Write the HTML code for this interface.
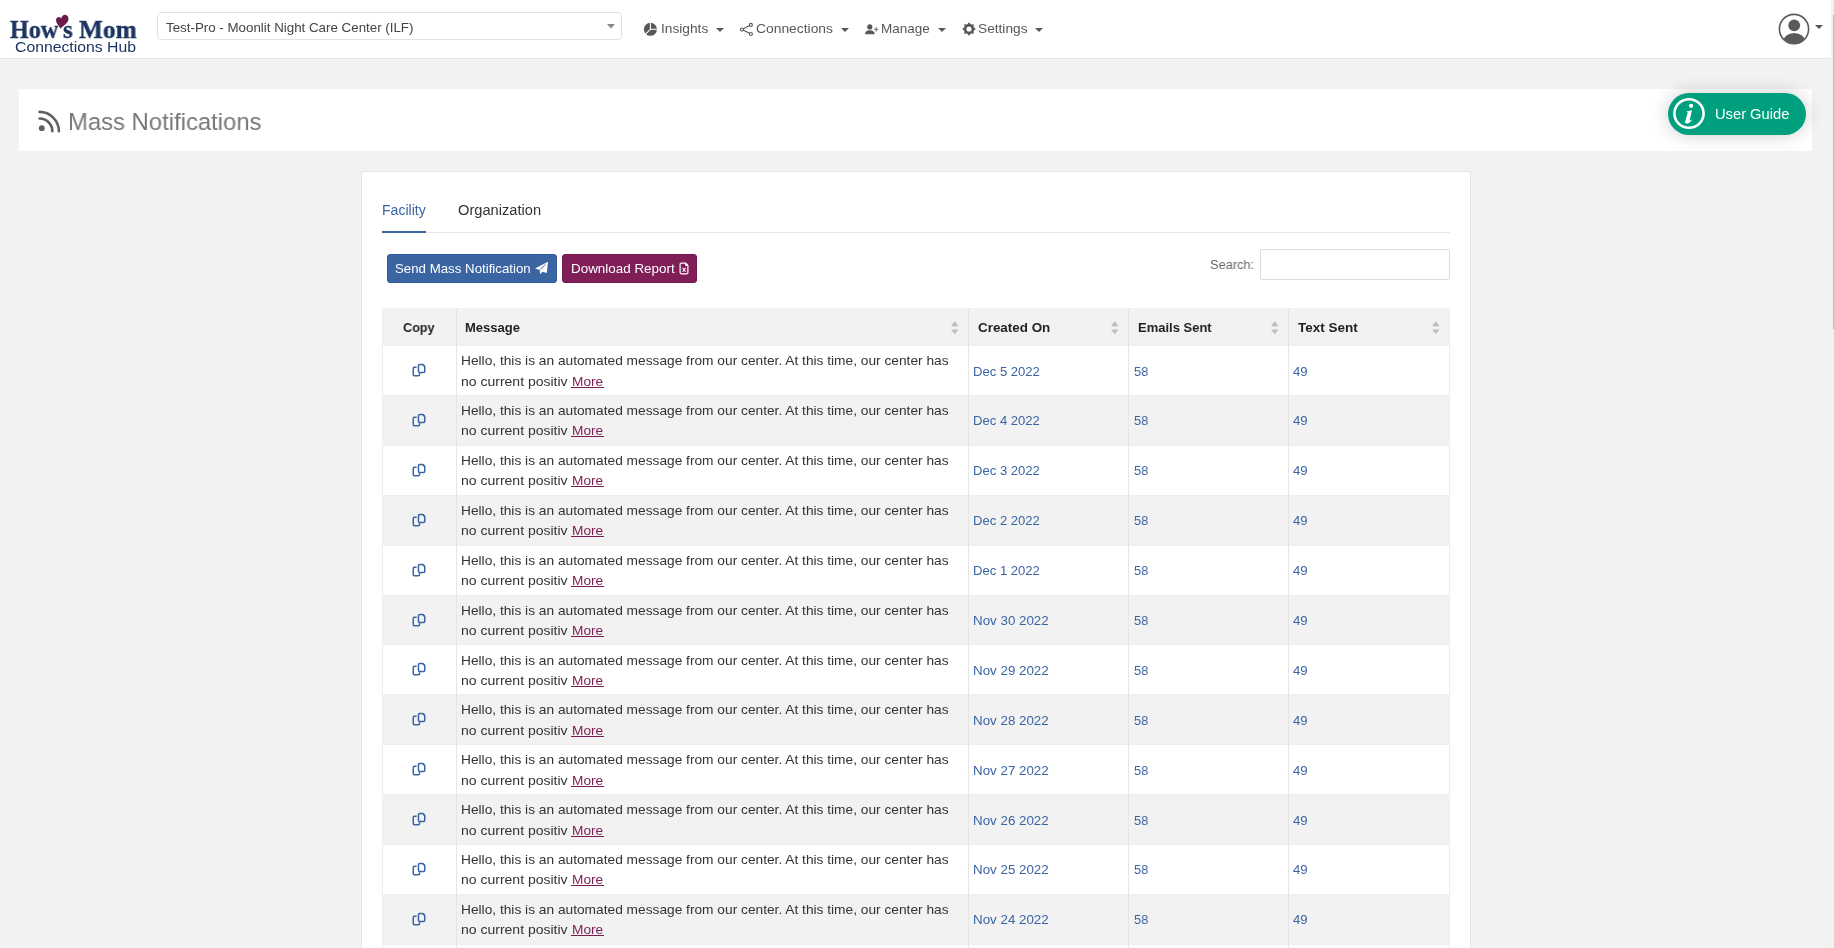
<!DOCTYPE html><html><head><meta charset="utf-8"><title>Mass Notifications</title><style>
*{box-sizing:border-box}
html,body{margin:0;padding:0}
body{width:1834px;height:948px;overflow:hidden;background:#f2f2f2;position:relative;font-family:'Liberation Sans',sans-serif}
.t{position:absolute;white-space:nowrap;will-change:transform}
.abs{position:absolute}
svg{position:absolute;overflow:visible}
</style></head><body><header>
<div class="abs" style="left:0;top:0;width:1831px;height:58px;background:#fff"></div>
<div class="abs" style="left:0;top:58px;width:1831px;height:1px;background:#e4e6e8"></div>
<div class="abs" style="left:1831px;top:0;width:3px;height:948px;background:#f1f1f1"></div>
<div class="abs" style="left:1833px;top:15px;width:1px;height:314px;background:#bdbdbd"></div>
<div class="t" style="left:9.80px;top:17.29px;font-size:26.0px;line-height:26.0px;font-family:'Liberation Serif', serif;color:#1c3461;font-weight:bold;transform:scaleX(0.9269);transform-origin:0 0;-webkit-text-stroke:0.35px #1c3461;">How</div>
<div class="t" style="left:62.80px;top:17.29px;font-size:26.0px;line-height:26.0px;font-family:'Liberation Serif', serif;color:#1c3461;font-weight:bold;transform:scaleX(0.9566);transform-origin:0 0;-webkit-text-stroke:0.35px #1c3461;">s</div>
<div class="t" style="left:79.00px;top:17.29px;font-size:26.0px;line-height:26.0px;font-family:'Liberation Serif', serif;color:#1c3461;font-weight:bold;transform:scaleX(0.9755);transform-origin:0 0;-webkit-text-stroke:0.35px #1c3461;">Mom</div>
<svg style="left:50px;top:10px" width="20" height="20" viewBox="0 0 20 20"><path d="M10.3 18.7 C9.5 16 6.6 14 6.1 11.2 C5.7 8.7 7 6.9 8.8 7 C10 7.1 10.8 7.8 11.2 8.6 C11.6 6 13.4 4.6 15.2 4.7 C17.4 4.9 18.8 7 18.5 9.6 C18.1 12.5 14.8 15.2 10.3 18.7 Z" fill="#6b1b47"/></svg>
<div class="t" style="left:14.80px;top:39.70px;font-size:14.3px;line-height:14.3px;font-family:'Liberation Sans', sans-serif;color:#1c3461;font-weight:normal;transform:scaleX(1.1032);transform-origin:0 0;">Connections Hub</div>
<div class="abs" style="left:157px;top:12px;width:465px;height:28px;border:1px solid #dfe2e5;border-radius:4px;background:#fff"></div>
<div class="t" style="left:165.80px;top:20.74px;font-size:13.3px;line-height:13.3px;font-family:'Liberation Sans', sans-serif;color:#444;font-weight:normal;transform:scaleX(1.0026);transform-origin:0 0;">Test-Pro - Moonlit Night Care Center (ILF)</div>
<svg style="left:607px;top:24px" width="8" height="5" viewBox="0 0 8 5"><path d="M0 0H8L4 4.5Z" fill="#888"/></svg>
<nav>
<svg style="left:643px;top:22px" width="15" height="15" viewBox="0 0 15 15"><circle cx="7.4" cy="7.3" r="6.5" fill="#585858"/><path d="M7.4 7.3 V0 M7.4 7.3 H14.5 M7.4 7.3 L2 12.7" stroke="#fff" stroke-width="1.1"/></svg>
<div class="t" style="left:660.95px;top:21.80px;font-size:13.0px;line-height:13.0px;font-family:'Liberation Sans', sans-serif;color:#585858;font-weight:normal;transform:scaleX(1.0550);transform-origin:0 0;">Insights</div>
<svg style="left:716px;top:28px" width="8" height="4" viewBox="0 0 8 4"><path d="M0 0H8L4 4Z" fill="#585858"/></svg>
<svg style="left:739px;top:21px" width="15" height="16" viewBox="0 0 15 16"><g fill="none" stroke="#585858" stroke-width="1.15"><circle cx="11.9" cy="3.9" r="1.5"/><circle cx="3" cy="8.45" r="1.5"/><circle cx="11.9" cy="13" r="1.5"/><path d="M4.4 7.7 L10.5 4.6 M4.4 9.2 L10.5 12.3"/></g></svg>
<div class="t" style="left:756.20px;top:21.80px;font-size:13.0px;line-height:13.0px;font-family:'Liberation Sans', sans-serif;color:#585858;font-weight:normal;transform:scaleX(1.0653);transform-origin:0 0;">Connections</div>
<svg style="left:841px;top:28px" width="8" height="4" viewBox="0 0 8 4"><path d="M0 0H8L4 4Z" fill="#585858"/></svg>
<svg style="left:864px;top:23px" width="16" height="13" viewBox="0 0 16 13"><circle cx="5.8" cy="3.9" r="2.6" fill="#585858"/><path d="M1 11.2 C1 8.6 3 7.2 5.8 7.2 C8.6 7.2 10.7 8.6 10.7 11.2Z" fill="#585858"/><path d="M12.2 4.3 V8.5 M10.1 6.4 H14.3" stroke="#585858" stroke-width="1.3" opacity="0.75"/></svg>
<div class="t" style="left:881.40px;top:21.80px;font-size:13.0px;line-height:13.0px;font-family:'Liberation Sans', sans-serif;color:#585858;font-weight:normal;transform:scaleX(1.0384);transform-origin:0 0;">Manage</div>
<svg style="left:938px;top:28px" width="8" height="4" viewBox="0 0 8 4"><path d="M0 0H8L4 4Z" fill="#585858"/></svg>
<svg style="left:961.5px;top:22.4px" width="14" height="14" viewBox="0 0 14 14"><path fill-rule="evenodd" d="M7.00,0.30 L8.88,2.47 L11.74,2.26 L11.53,5.12 L13.70,7.00 L11.53,8.88 L11.74,11.74 L8.88,11.53 L7.00,13.70 L5.12,11.53 L2.26,11.74 L2.47,8.88 L0.30,7.00 L2.47,5.12 L2.26,2.26 L5.12,2.47Z M9.6 7 A2.6 2.6 0 1 0 4.4 7 A2.6 2.6 0 1 0 9.6 7Z" fill="#585858"/></svg>
<div class="t" style="left:977.70px;top:21.80px;font-size:13.0px;line-height:13.0px;font-family:'Liberation Sans', sans-serif;color:#585858;font-weight:normal;transform:scaleX(1.0533);transform-origin:0 0;">Settings</div>
<svg style="left:1035px;top:28px" width="8" height="4" viewBox="0 0 8 4"><path d="M0 0H8L4 4Z" fill="#585858"/></svg>
</nav>
<svg style="left:1778px;top:13px" width="32" height="32" viewBox="0 0 32 32"><defs><clipPath id="cc"><circle cx="16" cy="16" r="14.2"/></clipPath></defs><circle cx="16" cy="16" r="14.6" fill="none" stroke="#5a5a5a" stroke-width="1.6"/><g clip-path="url(#cc)" fill="#5a5a5a"><circle cx="16.2" cy="12.3" r="5.9"/><ellipse cx="16.2" cy="28.6" rx="11" ry="8.6"/></g></svg>
<svg style="left:1815px;top:24.5px" width="8" height="4" viewBox="0 0 8 4"><path d="M0 0H8L4 4Z" fill="#555"/></svg>
</header>
<main>
<div class="abs" style="left:19px;top:89px;width:1793px;height:62px;background:#fff"></div>
<svg style="left:38px;top:110px" width="23" height="22" viewBox="0 0 23 22"><g fill="none" stroke="#5d6165" stroke-width="2.6" stroke-linecap="round"><path d="M1.6 1.9 A19.3 19.3 0 0 1 20.9 21.2"/><path d="M1.6 8.5 A12.9 12.9 0 0 1 14.4 21.2"/></g><circle cx="3.8" cy="18.2" r="2.9" fill="#5d6165"/></svg>
<div class="t" style="left:68.10px;top:110.26px;font-size:24.5px;line-height:24.5px;font-family:'Liberation Sans', sans-serif;color:#777;font-weight:normal;transform:scaleX(0.9733);transform-origin:0 0;">Mass Notifications</div>
<div class="abs" style="left:1668px;top:93px;width:138px;height:42px;border-radius:21px;background:#00a07f;box-shadow:0 0 18px rgba(0,0,0,0.2)"></div>
<svg style="left:1672px;top:97px" width="34" height="34" viewBox="0 0 34 34"><ellipse cx="17" cy="16.5" rx="14.6" ry="14.3" fill="none" stroke="#fff" stroke-width="2.6"/><circle cx="19.1" cy="8.8" r="2.15" fill="#fff"/><path d="M14.4 14.4 L20 13.2 L17.5 23.7 C18.2 23.6 19 23.2 19.8 22.6 L19.9 23 C18.6 25.2 16.8 26.6 14.9 26.6 C13.4 26.4 12.8 25.8 13.0 24.9 L15.8 15.4 L14.6 14.8 Z" fill="#fff"/></svg>
<div class="t" style="left:1714.60px;top:106.80px;font-size:14.3px;line-height:14.3px;font-family:'Liberation Sans', sans-serif;color:#fff;font-weight:normal;transform:scaleX(1.0282);transform-origin:0 0;">User Guide</div>
<div class="abs" style="left:361px;top:171px;width:1110px;height:800px;background:#fff;border:1px solid #e3e6ea"></div>
<div class="t" style="left:382.10px;top:202.85px;font-size:14.0px;line-height:14.0px;font-family:'Liberation Sans', sans-serif;color:#3b64a2;font-weight:normal;transform:scaleX(1.0037);transform-origin:0 0;">Facility</div>
<div class="abs" style="left:382px;top:232px;width:1068px;height:1px;background:#e6e8ea"></div>
<div class="abs" style="left:382px;top:230.8px;width:44px;height:2px;background:#3b64a2"></div>
<div class="t" style="left:458.20px;top:202.85px;font-size:14.0px;line-height:14.0px;font-family:'Liberation Sans', sans-serif;color:#333;font-weight:normal;transform:scaleX(1.0469);transform-origin:0 0;">Organization</div>
<div class="abs" style="left:387px;top:254px;width:170px;height:29px;border-radius:3px;background:#3b64a2;border:1px solid #2f5a9c"></div>
<div class="t" style="left:394.90px;top:262.40px;font-size:13.0px;line-height:13.0px;font-family:'Liberation Sans', sans-serif;color:#fff;font-weight:normal;transform:scaleX(1.0209);transform-origin:0 0;">Send Mass Notification</div>
<svg style="left:534px;top:261px" width="15" height="14" viewBox="0 0 15 14"><path d="M14 0.8 L1 7.6 L5.6 9 L6.2 13 L8.6 10.8 L12.8 12 Z" fill="#fff"/><path d="M5.6 9 L11.6 3.4" stroke="#3b64a2" stroke-width="0.9"/></svg>
<div class="abs" style="left:562px;top:254px;width:135px;height:29px;border-radius:3px;background:#7f1e57;border:1px solid #761650"></div>
<div class="t" style="left:571.20px;top:262.40px;font-size:13.0px;line-height:13.0px;font-family:'Liberation Sans', sans-serif;color:#fff;font-weight:normal;transform:scaleX(1.0326);transform-origin:0 0;">Download Report</div>
<svg style="left:678.5px;top:261.5px" width="10" height="13" viewBox="0 0 10 13"><path d="M2.4 1.1 H6.6 L8.9 3.4 V10.4 C8.9 11.3 8.3 11.9 7.4 11.9 H2.6 C1.7 11.9 1.1 11.3 1.1 10.4 V2.4 C1.1 1.6 1.6 1.1 2.4 1.1Z" fill="none" stroke="#fff" stroke-width="1.2"/><circle cx="7.3" cy="2.7" r="1.3" fill="#fff"/><path d="M3.6 5.9 L6.6 9.8 M6.6 5.9 L3.6 9.8" stroke="#fff" stroke-width="1.05"/></svg>
<div class="t" style="left:1209.80px;top:257.70px;font-size:13.0px;line-height:13.0px;font-family:'Liberation Sans', sans-serif;color:#666;font-weight:normal;transform:scaleX(0.9825);transform-origin:0 0;">Search:</div>
<div class="abs" style="left:1260px;top:249px;width:190px;height:31px;border:1px solid #dcdcdc;border-radius:2px;background:#fff"></div>
<div class="abs" style="left:382px;top:308px;width:1068px;height:38px;background:#f2f2f2"></div>
<div class="t" style="left:403.20px;top:321.00px;font-size:13.0px;line-height:13.0px;font-family:'Liberation Sans', sans-serif;color:#222;font-weight:bold;transform:scaleX(0.9723);transform-origin:0 0;">Copy</div>
<div class="t" style="left:465.40px;top:321.00px;font-size:13.0px;line-height:13.0px;font-family:'Liberation Sans', sans-serif;color:#222;font-weight:bold;transform:scaleX(1.0014);transform-origin:0 0;">Message</div>
<svg style="left:950.7px;top:320.5px" width="8" height="14" viewBox="0 0 8 14"><path d="M0 5.2 L3.75 0.3 L7.5 5.2Z M0 8.4 L3.75 13.3 L7.5 8.4Z" fill="#bdbdbd"/></svg>
<div class="t" style="left:977.70px;top:321.00px;font-size:13.0px;line-height:13.0px;font-family:'Liberation Sans', sans-serif;color:#222;font-weight:bold;transform:scaleX(1.0318);transform-origin:0 0;">Created On</div>
<svg style="left:1110.7px;top:320.5px" width="8" height="14" viewBox="0 0 8 14"><path d="M0 5.2 L3.75 0.3 L7.5 5.2Z M0 8.4 L3.75 13.3 L7.5 8.4Z" fill="#bdbdbd"/></svg>
<div class="t" style="left:1138.00px;top:321.00px;font-size:13.0px;line-height:13.0px;font-family:'Liberation Sans', sans-serif;color:#222;font-weight:bold;transform:scaleX(0.9985);transform-origin:0 0;">Emails Sent</div>
<svg style="left:1270.7px;top:320.5px" width="8" height="14" viewBox="0 0 8 14"><path d="M0 5.2 L3.75 0.3 L7.5 5.2Z M0 8.4 L3.75 13.3 L7.5 8.4Z" fill="#bdbdbd"/></svg>
<div class="t" style="left:1297.80px;top:321.00px;font-size:13.0px;line-height:13.0px;font-family:'Liberation Sans', sans-serif;color:#222;font-weight:bold;transform:scaleX(1.0395);transform-origin:0 0;">Text Sent</div>
<svg style="left:1431.7px;top:320.5px" width="8" height="14" viewBox="0 0 8 14"><path d="M0 5.2 L3.75 0.3 L7.5 5.2Z M0 8.4 L3.75 13.3 L7.5 8.4Z" fill="#bdbdbd"/></svg>
<div class="abs" style="left:382px;top:345.70px;width:1068px;height:50.00px;background:#fff"></div>
<div class="abs" style="left:382px;top:345.20px;width:1068px;height:1px;background:#eeeeee"></div>
<svg style="left:412.0px;top:363.10px" width="15" height="15" viewBox="0 0 15 15"><g fill="none" stroke="#3b64a2" stroke-width="1.5"><path d="M4.6 4.25 H2.45 Q1.25 4.25 1.25 5.45 V11.55 Q1.25 12.75 2.45 12.75 H6.35 Q7.55 12.75 7.55 11.55 V10.3"/><path d="M7.65 1.45 H10.6 L12.75 3.6 V8.35 Q12.75 9.55 11.55 9.55 H7.65 Q6.45 9.55 6.45 8.35 V2.65 Q6.45 1.45 7.65 1.45 Z"/></g><path d="M10.2 1.2 L13 4 V2.4 L11.8 1.2Z" fill="#3b64a2"/></svg>
<div class="t" style="left:461.30px;top:354.00px;font-size:13.0px;line-height:13.0px;font-family:'Liberation Sans', sans-serif;color:#333;font-weight:normal;transform:scaleX(1.0560);transform-origin:0 0;">Hello, this is an automated message from our center. At this time, our center has</div>
<div class="t" style="left:461.30px;top:375.00px;font-size:13.0px;line-height:13.0px;font-family:'Liberation Sans', sans-serif;color:#333;font-weight:normal;transform:scaleX(1.0768);transform-origin:0 0;">no current positiv</div>
<div class="t" style="left:571.70px;top:375.00px;font-size:13.0px;line-height:13.0px;font-family:'Liberation Sans', sans-serif;color:#7b1c50;font-weight:normal;transform:scaleX(1.0526);transform-origin:0 0;">More</div>
<div class="abs" style="left:571.1px;top:387.00px;width:32.8px;height:1px;background:#7b1c50"></div>
<div class="t" style="left:973.30px;top:365.00px;font-size:13.0px;line-height:13.0px;font-family:'Liberation Sans', sans-serif;color:#3b64a2;font-weight:normal;transform:scaleX(1.0061);transform-origin:0 0;">Dec 5 2022</div>
<div class="t" style="left:1133.50px;top:365.00px;font-size:13.0px;line-height:13.0px;font-family:'Liberation Sans', sans-serif;color:#3b64a2;font-weight:normal;transform:scaleX(0.9841);transform-origin:0 0;">58</div>
<div class="t" style="left:1293.20px;top:365.00px;font-size:13.0px;line-height:13.0px;font-family:'Liberation Sans', sans-serif;color:#3b64a2;font-weight:normal;transform:scaleX(1.0118);transform-origin:0 0;">49</div>
<div class="abs" style="left:382px;top:395.58px;width:1068px;height:50.00px;background:#f2f2f2"></div>
<div class="abs" style="left:382px;top:395.08px;width:1068px;height:1px;background:#eeeeee"></div>
<svg style="left:412.0px;top:412.98px" width="15" height="15" viewBox="0 0 15 15"><g fill="none" stroke="#3b64a2" stroke-width="1.5"><path d="M4.6 4.25 H2.45 Q1.25 4.25 1.25 5.45 V11.55 Q1.25 12.75 2.45 12.75 H6.35 Q7.55 12.75 7.55 11.55 V10.3"/><path d="M7.65 1.45 H10.6 L12.75 3.6 V8.35 Q12.75 9.55 11.55 9.55 H7.65 Q6.45 9.55 6.45 8.35 V2.65 Q6.45 1.45 7.65 1.45 Z"/></g><path d="M10.2 1.2 L13 4 V2.4 L11.8 1.2Z" fill="#3b64a2"/></svg>
<div class="t" style="left:461.30px;top:404.00px;font-size:13.0px;line-height:13.0px;font-family:'Liberation Sans', sans-serif;color:#333;font-weight:normal;transform:scaleX(1.0560);transform-origin:0 0;">Hello, this is an automated message from our center. At this time, our center has</div>
<div class="t" style="left:461.30px;top:424.00px;font-size:13.0px;line-height:13.0px;font-family:'Liberation Sans', sans-serif;color:#333;font-weight:normal;transform:scaleX(1.0768);transform-origin:0 0;">no current positiv</div>
<div class="t" style="left:571.70px;top:424.00px;font-size:13.0px;line-height:13.0px;font-family:'Liberation Sans', sans-serif;color:#7b1c50;font-weight:normal;transform:scaleX(1.0526);transform-origin:0 0;">More</div>
<div class="abs" style="left:571.1px;top:436.00px;width:32.8px;height:1px;background:#7b1c50"></div>
<div class="t" style="left:973.30px;top:414.00px;font-size:13.0px;line-height:13.0px;font-family:'Liberation Sans', sans-serif;color:#3b64a2;font-weight:normal;transform:scaleX(1.0061);transform-origin:0 0;">Dec 4 2022</div>
<div class="t" style="left:1133.50px;top:414.00px;font-size:13.0px;line-height:13.0px;font-family:'Liberation Sans', sans-serif;color:#3b64a2;font-weight:normal;transform:scaleX(0.9841);transform-origin:0 0;">58</div>
<div class="t" style="left:1293.20px;top:414.00px;font-size:13.0px;line-height:13.0px;font-family:'Liberation Sans', sans-serif;color:#3b64a2;font-weight:normal;transform:scaleX(1.0118);transform-origin:0 0;">49</div>
<div class="abs" style="left:382px;top:445.46px;width:1068px;height:50.00px;background:#fff"></div>
<div class="abs" style="left:382px;top:444.96px;width:1068px;height:1px;background:#eeeeee"></div>
<svg style="left:412.0px;top:462.86px" width="15" height="15" viewBox="0 0 15 15"><g fill="none" stroke="#3b64a2" stroke-width="1.5"><path d="M4.6 4.25 H2.45 Q1.25 4.25 1.25 5.45 V11.55 Q1.25 12.75 2.45 12.75 H6.35 Q7.55 12.75 7.55 11.55 V10.3"/><path d="M7.65 1.45 H10.6 L12.75 3.6 V8.35 Q12.75 9.55 11.55 9.55 H7.65 Q6.45 9.55 6.45 8.35 V2.65 Q6.45 1.45 7.65 1.45 Z"/></g><path d="M10.2 1.2 L13 4 V2.4 L11.8 1.2Z" fill="#3b64a2"/></svg>
<div class="t" style="left:461.30px;top:454.00px;font-size:13.0px;line-height:13.0px;font-family:'Liberation Sans', sans-serif;color:#333;font-weight:normal;transform:scaleX(1.0560);transform-origin:0 0;">Hello, this is an automated message from our center. At this time, our center has</div>
<div class="t" style="left:461.30px;top:474.00px;font-size:13.0px;line-height:13.0px;font-family:'Liberation Sans', sans-serif;color:#333;font-weight:normal;transform:scaleX(1.0768);transform-origin:0 0;">no current positiv</div>
<div class="t" style="left:571.70px;top:474.00px;font-size:13.0px;line-height:13.0px;font-family:'Liberation Sans', sans-serif;color:#7b1c50;font-weight:normal;transform:scaleX(1.0526);transform-origin:0 0;">More</div>
<div class="abs" style="left:571.1px;top:486.00px;width:32.8px;height:1px;background:#7b1c50"></div>
<div class="t" style="left:973.30px;top:464.00px;font-size:13.0px;line-height:13.0px;font-family:'Liberation Sans', sans-serif;color:#3b64a2;font-weight:normal;transform:scaleX(1.0061);transform-origin:0 0;">Dec 3 2022</div>
<div class="t" style="left:1133.50px;top:464.00px;font-size:13.0px;line-height:13.0px;font-family:'Liberation Sans', sans-serif;color:#3b64a2;font-weight:normal;transform:scaleX(0.9841);transform-origin:0 0;">58</div>
<div class="t" style="left:1293.20px;top:464.00px;font-size:13.0px;line-height:13.0px;font-family:'Liberation Sans', sans-serif;color:#3b64a2;font-weight:normal;transform:scaleX(1.0118);transform-origin:0 0;">49</div>
<div class="abs" style="left:382px;top:495.34px;width:1068px;height:50.00px;background:#f2f2f2"></div>
<div class="abs" style="left:382px;top:494.84px;width:1068px;height:1px;background:#eeeeee"></div>
<svg style="left:412.0px;top:512.74px" width="15" height="15" viewBox="0 0 15 15"><g fill="none" stroke="#3b64a2" stroke-width="1.5"><path d="M4.6 4.25 H2.45 Q1.25 4.25 1.25 5.45 V11.55 Q1.25 12.75 2.45 12.75 H6.35 Q7.55 12.75 7.55 11.55 V10.3"/><path d="M7.65 1.45 H10.6 L12.75 3.6 V8.35 Q12.75 9.55 11.55 9.55 H7.65 Q6.45 9.55 6.45 8.35 V2.65 Q6.45 1.45 7.65 1.45 Z"/></g><path d="M10.2 1.2 L13 4 V2.4 L11.8 1.2Z" fill="#3b64a2"/></svg>
<div class="t" style="left:461.30px;top:504.00px;font-size:13.0px;line-height:13.0px;font-family:'Liberation Sans', sans-serif;color:#333;font-weight:normal;transform:scaleX(1.0560);transform-origin:0 0;">Hello, this is an automated message from our center. At this time, our center has</div>
<div class="t" style="left:461.30px;top:524.00px;font-size:13.0px;line-height:13.0px;font-family:'Liberation Sans', sans-serif;color:#333;font-weight:normal;transform:scaleX(1.0768);transform-origin:0 0;">no current positiv</div>
<div class="t" style="left:571.70px;top:524.00px;font-size:13.0px;line-height:13.0px;font-family:'Liberation Sans', sans-serif;color:#7b1c50;font-weight:normal;transform:scaleX(1.0526);transform-origin:0 0;">More</div>
<div class="abs" style="left:571.1px;top:536.00px;width:32.8px;height:1px;background:#7b1c50"></div>
<div class="t" style="left:973.30px;top:514.00px;font-size:13.0px;line-height:13.0px;font-family:'Liberation Sans', sans-serif;color:#3b64a2;font-weight:normal;transform:scaleX(1.0061);transform-origin:0 0;">Dec 2 2022</div>
<div class="t" style="left:1133.50px;top:514.00px;font-size:13.0px;line-height:13.0px;font-family:'Liberation Sans', sans-serif;color:#3b64a2;font-weight:normal;transform:scaleX(0.9841);transform-origin:0 0;">58</div>
<div class="t" style="left:1293.20px;top:514.00px;font-size:13.0px;line-height:13.0px;font-family:'Liberation Sans', sans-serif;color:#3b64a2;font-weight:normal;transform:scaleX(1.0118);transform-origin:0 0;">49</div>
<div class="abs" style="left:382px;top:545.22px;width:1068px;height:50.00px;background:#fff"></div>
<div class="abs" style="left:382px;top:544.72px;width:1068px;height:1px;background:#eeeeee"></div>
<svg style="left:412.0px;top:562.62px" width="15" height="15" viewBox="0 0 15 15"><g fill="none" stroke="#3b64a2" stroke-width="1.5"><path d="M4.6 4.25 H2.45 Q1.25 4.25 1.25 5.45 V11.55 Q1.25 12.75 2.45 12.75 H6.35 Q7.55 12.75 7.55 11.55 V10.3"/><path d="M7.65 1.45 H10.6 L12.75 3.6 V8.35 Q12.75 9.55 11.55 9.55 H7.65 Q6.45 9.55 6.45 8.35 V2.65 Q6.45 1.45 7.65 1.45 Z"/></g><path d="M10.2 1.2 L13 4 V2.4 L11.8 1.2Z" fill="#3b64a2"/></svg>
<div class="t" style="left:461.30px;top:554.00px;font-size:13.0px;line-height:13.0px;font-family:'Liberation Sans', sans-serif;color:#333;font-weight:normal;transform:scaleX(1.0560);transform-origin:0 0;">Hello, this is an automated message from our center. At this time, our center has</div>
<div class="t" style="left:461.30px;top:574.00px;font-size:13.0px;line-height:13.0px;font-family:'Liberation Sans', sans-serif;color:#333;font-weight:normal;transform:scaleX(1.0768);transform-origin:0 0;">no current positiv</div>
<div class="t" style="left:571.70px;top:574.00px;font-size:13.0px;line-height:13.0px;font-family:'Liberation Sans', sans-serif;color:#7b1c50;font-weight:normal;transform:scaleX(1.0526);transform-origin:0 0;">More</div>
<div class="abs" style="left:571.1px;top:586.00px;width:32.8px;height:1px;background:#7b1c50"></div>
<div class="t" style="left:973.30px;top:564.00px;font-size:13.0px;line-height:13.0px;font-family:'Liberation Sans', sans-serif;color:#3b64a2;font-weight:normal;transform:scaleX(1.0061);transform-origin:0 0;">Dec 1 2022</div>
<div class="t" style="left:1133.50px;top:564.00px;font-size:13.0px;line-height:13.0px;font-family:'Liberation Sans', sans-serif;color:#3b64a2;font-weight:normal;transform:scaleX(0.9841);transform-origin:0 0;">58</div>
<div class="t" style="left:1293.20px;top:564.00px;font-size:13.0px;line-height:13.0px;font-family:'Liberation Sans', sans-serif;color:#3b64a2;font-weight:normal;transform:scaleX(1.0118);transform-origin:0 0;">49</div>
<div class="abs" style="left:382px;top:595.10px;width:1068px;height:50.00px;background:#f2f2f2"></div>
<div class="abs" style="left:382px;top:594.60px;width:1068px;height:1px;background:#eeeeee"></div>
<svg style="left:412.0px;top:612.50px" width="15" height="15" viewBox="0 0 15 15"><g fill="none" stroke="#3b64a2" stroke-width="1.5"><path d="M4.6 4.25 H2.45 Q1.25 4.25 1.25 5.45 V11.55 Q1.25 12.75 2.45 12.75 H6.35 Q7.55 12.75 7.55 11.55 V10.3"/><path d="M7.65 1.45 H10.6 L12.75 3.6 V8.35 Q12.75 9.55 11.55 9.55 H7.65 Q6.45 9.55 6.45 8.35 V2.65 Q6.45 1.45 7.65 1.45 Z"/></g><path d="M10.2 1.2 L13 4 V2.4 L11.8 1.2Z" fill="#3b64a2"/></svg>
<div class="t" style="left:461.30px;top:604.00px;font-size:13.0px;line-height:13.0px;font-family:'Liberation Sans', sans-serif;color:#333;font-weight:normal;transform:scaleX(1.0560);transform-origin:0 0;">Hello, this is an automated message from our center. At this time, our center has</div>
<div class="t" style="left:461.30px;top:624.00px;font-size:13.0px;line-height:13.0px;font-family:'Liberation Sans', sans-serif;color:#333;font-weight:normal;transform:scaleX(1.0768);transform-origin:0 0;">no current positiv</div>
<div class="t" style="left:571.70px;top:624.00px;font-size:13.0px;line-height:13.0px;font-family:'Liberation Sans', sans-serif;color:#7b1c50;font-weight:normal;transform:scaleX(1.0526);transform-origin:0 0;">More</div>
<div class="abs" style="left:571.1px;top:636.00px;width:32.8px;height:1px;background:#7b1c50"></div>
<div class="t" style="left:973.10px;top:614.00px;font-size:13.0px;line-height:13.0px;font-family:'Liberation Sans', sans-serif;color:#3b64a2;font-weight:normal;transform:scaleX(1.0270);transform-origin:0 0;">Nov 30 2022</div>
<div class="t" style="left:1133.50px;top:614.00px;font-size:13.0px;line-height:13.0px;font-family:'Liberation Sans', sans-serif;color:#3b64a2;font-weight:normal;transform:scaleX(0.9841);transform-origin:0 0;">58</div>
<div class="t" style="left:1293.20px;top:614.00px;font-size:13.0px;line-height:13.0px;font-family:'Liberation Sans', sans-serif;color:#3b64a2;font-weight:normal;transform:scaleX(1.0118);transform-origin:0 0;">49</div>
<div class="abs" style="left:382px;top:644.98px;width:1068px;height:50.00px;background:#fff"></div>
<div class="abs" style="left:382px;top:644.48px;width:1068px;height:1px;background:#eeeeee"></div>
<svg style="left:412.0px;top:662.38px" width="15" height="15" viewBox="0 0 15 15"><g fill="none" stroke="#3b64a2" stroke-width="1.5"><path d="M4.6 4.25 H2.45 Q1.25 4.25 1.25 5.45 V11.55 Q1.25 12.75 2.45 12.75 H6.35 Q7.55 12.75 7.55 11.55 V10.3"/><path d="M7.65 1.45 H10.6 L12.75 3.6 V8.35 Q12.75 9.55 11.55 9.55 H7.65 Q6.45 9.55 6.45 8.35 V2.65 Q6.45 1.45 7.65 1.45 Z"/></g><path d="M10.2 1.2 L13 4 V2.4 L11.8 1.2Z" fill="#3b64a2"/></svg>
<div class="t" style="left:461.30px;top:654.00px;font-size:13.0px;line-height:13.0px;font-family:'Liberation Sans', sans-serif;color:#333;font-weight:normal;transform:scaleX(1.0560);transform-origin:0 0;">Hello, this is an automated message from our center. At this time, our center has</div>
<div class="t" style="left:461.30px;top:674.00px;font-size:13.0px;line-height:13.0px;font-family:'Liberation Sans', sans-serif;color:#333;font-weight:normal;transform:scaleX(1.0768);transform-origin:0 0;">no current positiv</div>
<div class="t" style="left:571.70px;top:674.00px;font-size:13.0px;line-height:13.0px;font-family:'Liberation Sans', sans-serif;color:#7b1c50;font-weight:normal;transform:scaleX(1.0526);transform-origin:0 0;">More</div>
<div class="abs" style="left:571.1px;top:686.00px;width:32.8px;height:1px;background:#7b1c50"></div>
<div class="t" style="left:973.10px;top:664.00px;font-size:13.0px;line-height:13.0px;font-family:'Liberation Sans', sans-serif;color:#3b64a2;font-weight:normal;transform:scaleX(1.0270);transform-origin:0 0;">Nov 29 2022</div>
<div class="t" style="left:1133.50px;top:664.00px;font-size:13.0px;line-height:13.0px;font-family:'Liberation Sans', sans-serif;color:#3b64a2;font-weight:normal;transform:scaleX(0.9841);transform-origin:0 0;">58</div>
<div class="t" style="left:1293.20px;top:664.00px;font-size:13.0px;line-height:13.0px;font-family:'Liberation Sans', sans-serif;color:#3b64a2;font-weight:normal;transform:scaleX(1.0118);transform-origin:0 0;">49</div>
<div class="abs" style="left:382px;top:694.86px;width:1068px;height:50.00px;background:#f2f2f2"></div>
<div class="abs" style="left:382px;top:694.36px;width:1068px;height:1px;background:#eeeeee"></div>
<svg style="left:412.0px;top:712.26px" width="15" height="15" viewBox="0 0 15 15"><g fill="none" stroke="#3b64a2" stroke-width="1.5"><path d="M4.6 4.25 H2.45 Q1.25 4.25 1.25 5.45 V11.55 Q1.25 12.75 2.45 12.75 H6.35 Q7.55 12.75 7.55 11.55 V10.3"/><path d="M7.65 1.45 H10.6 L12.75 3.6 V8.35 Q12.75 9.55 11.55 9.55 H7.65 Q6.45 9.55 6.45 8.35 V2.65 Q6.45 1.45 7.65 1.45 Z"/></g><path d="M10.2 1.2 L13 4 V2.4 L11.8 1.2Z" fill="#3b64a2"/></svg>
<div class="t" style="left:461.30px;top:703.00px;font-size:13.0px;line-height:13.0px;font-family:'Liberation Sans', sans-serif;color:#333;font-weight:normal;transform:scaleX(1.0560);transform-origin:0 0;">Hello, this is an automated message from our center. At this time, our center has</div>
<div class="t" style="left:461.30px;top:724.00px;font-size:13.0px;line-height:13.0px;font-family:'Liberation Sans', sans-serif;color:#333;font-weight:normal;transform:scaleX(1.0768);transform-origin:0 0;">no current positiv</div>
<div class="t" style="left:571.70px;top:724.00px;font-size:13.0px;line-height:13.0px;font-family:'Liberation Sans', sans-serif;color:#7b1c50;font-weight:normal;transform:scaleX(1.0526);transform-origin:0 0;">More</div>
<div class="abs" style="left:571.1px;top:736.00px;width:32.8px;height:1px;background:#7b1c50"></div>
<div class="t" style="left:973.10px;top:714.00px;font-size:13.0px;line-height:13.0px;font-family:'Liberation Sans', sans-serif;color:#3b64a2;font-weight:normal;transform:scaleX(1.0270);transform-origin:0 0;">Nov 28 2022</div>
<div class="t" style="left:1133.50px;top:714.00px;font-size:13.0px;line-height:13.0px;font-family:'Liberation Sans', sans-serif;color:#3b64a2;font-weight:normal;transform:scaleX(0.9841);transform-origin:0 0;">58</div>
<div class="t" style="left:1293.20px;top:714.00px;font-size:13.0px;line-height:13.0px;font-family:'Liberation Sans', sans-serif;color:#3b64a2;font-weight:normal;transform:scaleX(1.0118);transform-origin:0 0;">49</div>
<div class="abs" style="left:382px;top:744.74px;width:1068px;height:50.00px;background:#fff"></div>
<div class="abs" style="left:382px;top:744.24px;width:1068px;height:1px;background:#eeeeee"></div>
<svg style="left:412.0px;top:762.14px" width="15" height="15" viewBox="0 0 15 15"><g fill="none" stroke="#3b64a2" stroke-width="1.5"><path d="M4.6 4.25 H2.45 Q1.25 4.25 1.25 5.45 V11.55 Q1.25 12.75 2.45 12.75 H6.35 Q7.55 12.75 7.55 11.55 V10.3"/><path d="M7.65 1.45 H10.6 L12.75 3.6 V8.35 Q12.75 9.55 11.55 9.55 H7.65 Q6.45 9.55 6.45 8.35 V2.65 Q6.45 1.45 7.65 1.45 Z"/></g><path d="M10.2 1.2 L13 4 V2.4 L11.8 1.2Z" fill="#3b64a2"/></svg>
<div class="t" style="left:461.30px;top:753.00px;font-size:13.0px;line-height:13.0px;font-family:'Liberation Sans', sans-serif;color:#333;font-weight:normal;transform:scaleX(1.0560);transform-origin:0 0;">Hello, this is an automated message from our center. At this time, our center has</div>
<div class="t" style="left:461.30px;top:774.00px;font-size:13.0px;line-height:13.0px;font-family:'Liberation Sans', sans-serif;color:#333;font-weight:normal;transform:scaleX(1.0768);transform-origin:0 0;">no current positiv</div>
<div class="t" style="left:571.70px;top:774.00px;font-size:13.0px;line-height:13.0px;font-family:'Liberation Sans', sans-serif;color:#7b1c50;font-weight:normal;transform:scaleX(1.0526);transform-origin:0 0;">More</div>
<div class="abs" style="left:571.1px;top:786.00px;width:32.8px;height:1px;background:#7b1c50"></div>
<div class="t" style="left:973.10px;top:764.00px;font-size:13.0px;line-height:13.0px;font-family:'Liberation Sans', sans-serif;color:#3b64a2;font-weight:normal;transform:scaleX(1.0270);transform-origin:0 0;">Nov 27 2022</div>
<div class="t" style="left:1133.50px;top:764.00px;font-size:13.0px;line-height:13.0px;font-family:'Liberation Sans', sans-serif;color:#3b64a2;font-weight:normal;transform:scaleX(0.9841);transform-origin:0 0;">58</div>
<div class="t" style="left:1293.20px;top:764.00px;font-size:13.0px;line-height:13.0px;font-family:'Liberation Sans', sans-serif;color:#3b64a2;font-weight:normal;transform:scaleX(1.0118);transform-origin:0 0;">49</div>
<div class="abs" style="left:382px;top:794.62px;width:1068px;height:50.00px;background:#f2f2f2"></div>
<div class="abs" style="left:382px;top:794.12px;width:1068px;height:1px;background:#eeeeee"></div>
<svg style="left:412.0px;top:812.02px" width="15" height="15" viewBox="0 0 15 15"><g fill="none" stroke="#3b64a2" stroke-width="1.5"><path d="M4.6 4.25 H2.45 Q1.25 4.25 1.25 5.45 V11.55 Q1.25 12.75 2.45 12.75 H6.35 Q7.55 12.75 7.55 11.55 V10.3"/><path d="M7.65 1.45 H10.6 L12.75 3.6 V8.35 Q12.75 9.55 11.55 9.55 H7.65 Q6.45 9.55 6.45 8.35 V2.65 Q6.45 1.45 7.65 1.45 Z"/></g><path d="M10.2 1.2 L13 4 V2.4 L11.8 1.2Z" fill="#3b64a2"/></svg>
<div class="t" style="left:461.30px;top:803.00px;font-size:13.0px;line-height:13.0px;font-family:'Liberation Sans', sans-serif;color:#333;font-weight:normal;transform:scaleX(1.0560);transform-origin:0 0;">Hello, this is an automated message from our center. At this time, our center has</div>
<div class="t" style="left:461.30px;top:824.00px;font-size:13.0px;line-height:13.0px;font-family:'Liberation Sans', sans-serif;color:#333;font-weight:normal;transform:scaleX(1.0768);transform-origin:0 0;">no current positiv</div>
<div class="t" style="left:571.70px;top:824.00px;font-size:13.0px;line-height:13.0px;font-family:'Liberation Sans', sans-serif;color:#7b1c50;font-weight:normal;transform:scaleX(1.0526);transform-origin:0 0;">More</div>
<div class="abs" style="left:571.1px;top:836.00px;width:32.8px;height:1px;background:#7b1c50"></div>
<div class="t" style="left:973.10px;top:814.00px;font-size:13.0px;line-height:13.0px;font-family:'Liberation Sans', sans-serif;color:#3b64a2;font-weight:normal;transform:scaleX(1.0270);transform-origin:0 0;">Nov 26 2022</div>
<div class="t" style="left:1133.50px;top:814.00px;font-size:13.0px;line-height:13.0px;font-family:'Liberation Sans', sans-serif;color:#3b64a2;font-weight:normal;transform:scaleX(0.9841);transform-origin:0 0;">58</div>
<div class="t" style="left:1293.20px;top:814.00px;font-size:13.0px;line-height:13.0px;font-family:'Liberation Sans', sans-serif;color:#3b64a2;font-weight:normal;transform:scaleX(1.0118);transform-origin:0 0;">49</div>
<div class="abs" style="left:382px;top:844.50px;width:1068px;height:50.00px;background:#fff"></div>
<div class="abs" style="left:382px;top:844.00px;width:1068px;height:1px;background:#eeeeee"></div>
<svg style="left:412.0px;top:861.90px" width="15" height="15" viewBox="0 0 15 15"><g fill="none" stroke="#3b64a2" stroke-width="1.5"><path d="M4.6 4.25 H2.45 Q1.25 4.25 1.25 5.45 V11.55 Q1.25 12.75 2.45 12.75 H6.35 Q7.55 12.75 7.55 11.55 V10.3"/><path d="M7.65 1.45 H10.6 L12.75 3.6 V8.35 Q12.75 9.55 11.55 9.55 H7.65 Q6.45 9.55 6.45 8.35 V2.65 Q6.45 1.45 7.65 1.45 Z"/></g><path d="M10.2 1.2 L13 4 V2.4 L11.8 1.2Z" fill="#3b64a2"/></svg>
<div class="t" style="left:461.30px;top:853.00px;font-size:13.0px;line-height:13.0px;font-family:'Liberation Sans', sans-serif;color:#333;font-weight:normal;transform:scaleX(1.0560);transform-origin:0 0;">Hello, this is an automated message from our center. At this time, our center has</div>
<div class="t" style="left:461.30px;top:873.00px;font-size:13.0px;line-height:13.0px;font-family:'Liberation Sans', sans-serif;color:#333;font-weight:normal;transform:scaleX(1.0768);transform-origin:0 0;">no current positiv</div>
<div class="t" style="left:571.70px;top:873.00px;font-size:13.0px;line-height:13.0px;font-family:'Liberation Sans', sans-serif;color:#7b1c50;font-weight:normal;transform:scaleX(1.0526);transform-origin:0 0;">More</div>
<div class="abs" style="left:571.1px;top:885.00px;width:32.8px;height:1px;background:#7b1c50"></div>
<div class="t" style="left:973.10px;top:863.00px;font-size:13.0px;line-height:13.0px;font-family:'Liberation Sans', sans-serif;color:#3b64a2;font-weight:normal;transform:scaleX(1.0270);transform-origin:0 0;">Nov 25 2022</div>
<div class="t" style="left:1133.50px;top:863.00px;font-size:13.0px;line-height:13.0px;font-family:'Liberation Sans', sans-serif;color:#3b64a2;font-weight:normal;transform:scaleX(0.9841);transform-origin:0 0;">58</div>
<div class="t" style="left:1293.20px;top:863.00px;font-size:13.0px;line-height:13.0px;font-family:'Liberation Sans', sans-serif;color:#3b64a2;font-weight:normal;transform:scaleX(1.0118);transform-origin:0 0;">49</div>
<div class="abs" style="left:382px;top:894.38px;width:1068px;height:50.00px;background:#f2f2f2"></div>
<div class="abs" style="left:382px;top:893.88px;width:1068px;height:1px;background:#eeeeee"></div>
<svg style="left:412.0px;top:911.78px" width="15" height="15" viewBox="0 0 15 15"><g fill="none" stroke="#3b64a2" stroke-width="1.5"><path d="M4.6 4.25 H2.45 Q1.25 4.25 1.25 5.45 V11.55 Q1.25 12.75 2.45 12.75 H6.35 Q7.55 12.75 7.55 11.55 V10.3"/><path d="M7.65 1.45 H10.6 L12.75 3.6 V8.35 Q12.75 9.55 11.55 9.55 H7.65 Q6.45 9.55 6.45 8.35 V2.65 Q6.45 1.45 7.65 1.45 Z"/></g><path d="M10.2 1.2 L13 4 V2.4 L11.8 1.2Z" fill="#3b64a2"/></svg>
<div class="t" style="left:461.30px;top:903.00px;font-size:13.0px;line-height:13.0px;font-family:'Liberation Sans', sans-serif;color:#333;font-weight:normal;transform:scaleX(1.0560);transform-origin:0 0;">Hello, this is an automated message from our center. At this time, our center has</div>
<div class="t" style="left:461.30px;top:923.00px;font-size:13.0px;line-height:13.0px;font-family:'Liberation Sans', sans-serif;color:#333;font-weight:normal;transform:scaleX(1.0768);transform-origin:0 0;">no current positiv</div>
<div class="t" style="left:571.70px;top:923.00px;font-size:13.0px;line-height:13.0px;font-family:'Liberation Sans', sans-serif;color:#7b1c50;font-weight:normal;transform:scaleX(1.0526);transform-origin:0 0;">More</div>
<div class="abs" style="left:571.1px;top:935.00px;width:32.8px;height:1px;background:#7b1c50"></div>
<div class="t" style="left:973.10px;top:913.00px;font-size:13.0px;line-height:13.0px;font-family:'Liberation Sans', sans-serif;color:#3b64a2;font-weight:normal;transform:scaleX(1.0270);transform-origin:0 0;">Nov 24 2022</div>
<div class="t" style="left:1133.50px;top:913.00px;font-size:13.0px;line-height:13.0px;font-family:'Liberation Sans', sans-serif;color:#3b64a2;font-weight:normal;transform:scaleX(0.9841);transform-origin:0 0;">58</div>
<div class="t" style="left:1293.20px;top:913.00px;font-size:13.0px;line-height:13.0px;font-family:'Liberation Sans', sans-serif;color:#3b64a2;font-weight:normal;transform:scaleX(1.0118);transform-origin:0 0;">49</div>
<div class="abs" style="left:382px;top:944.26px;width:1068px;height:50.00px;background:#fff"></div>
<div class="abs" style="left:382px;top:943.76px;width:1068px;height:1px;background:#eeeeee"></div>
<svg style="left:412.0px;top:961.66px" width="15" height="15" viewBox="0 0 15 15"><g fill="none" stroke="#3b64a2" stroke-width="1.5"><path d="M4.6 4.25 H2.45 Q1.25 4.25 1.25 5.45 V11.55 Q1.25 12.75 2.45 12.75 H6.35 Q7.55 12.75 7.55 11.55 V10.3"/><path d="M7.65 1.45 H10.6 L12.75 3.6 V8.35 Q12.75 9.55 11.55 9.55 H7.65 Q6.45 9.55 6.45 8.35 V2.65 Q6.45 1.45 7.65 1.45 Z"/></g><path d="M10.2 1.2 L13 4 V2.4 L11.8 1.2Z" fill="#3b64a2"/></svg>
<div class="t" style="left:461.30px;top:953.00px;font-size:13.0px;line-height:13.0px;font-family:'Liberation Sans', sans-serif;color:#333;font-weight:normal;transform:scaleX(1.0560);transform-origin:0 0;">Hello, this is an automated message from our center. At this time, our center has</div>
<div class="t" style="left:461.30px;top:973.00px;font-size:13.0px;line-height:13.0px;font-family:'Liberation Sans', sans-serif;color:#333;font-weight:normal;transform:scaleX(1.0768);transform-origin:0 0;">no current positiv</div>
<div class="t" style="left:571.70px;top:973.00px;font-size:13.0px;line-height:13.0px;font-family:'Liberation Sans', sans-serif;color:#7b1c50;font-weight:normal;transform:scaleX(1.0526);transform-origin:0 0;">More</div>
<div class="abs" style="left:571.1px;top:985.00px;width:32.8px;height:1px;background:#7b1c50"></div>
<div class="t" style="left:973.10px;top:963.00px;font-size:13.0px;line-height:13.0px;font-family:'Liberation Sans', sans-serif;color:#3b64a2;font-weight:normal;transform:scaleX(1.0270);transform-origin:0 0;">Nov 23 2022</div>
<div class="t" style="left:1133.50px;top:963.00px;font-size:13.0px;line-height:13.0px;font-family:'Liberation Sans', sans-serif;color:#3b64a2;font-weight:normal;transform:scaleX(0.9841);transform-origin:0 0;">58</div>
<div class="t" style="left:1293.20px;top:963.00px;font-size:13.0px;line-height:13.0px;font-family:'Liberation Sans', sans-serif;color:#3b64a2;font-weight:normal;transform:scaleX(1.0118);transform-origin:0 0;">49</div>
<div class="abs" style="left:456.0px;top:308px;width:1px;height:640px;background:#e6e6e6"></div>
<div class="abs" style="left:968.0px;top:308px;width:1px;height:640px;background:#e6e6e6"></div>
<div class="abs" style="left:1128.0px;top:308px;width:1px;height:640px;background:#e6e6e6"></div>
<div class="abs" style="left:1288.0px;top:308px;width:1px;height:640px;background:#e6e6e6"></div>
<div class="abs" style="left:382px;top:308px;width:1px;height:640px;background:#ededed"></div>
<div class="abs" style="left:1449px;top:308px;width:1px;height:640px;background:#ededed"></div>
</main></body></html>
